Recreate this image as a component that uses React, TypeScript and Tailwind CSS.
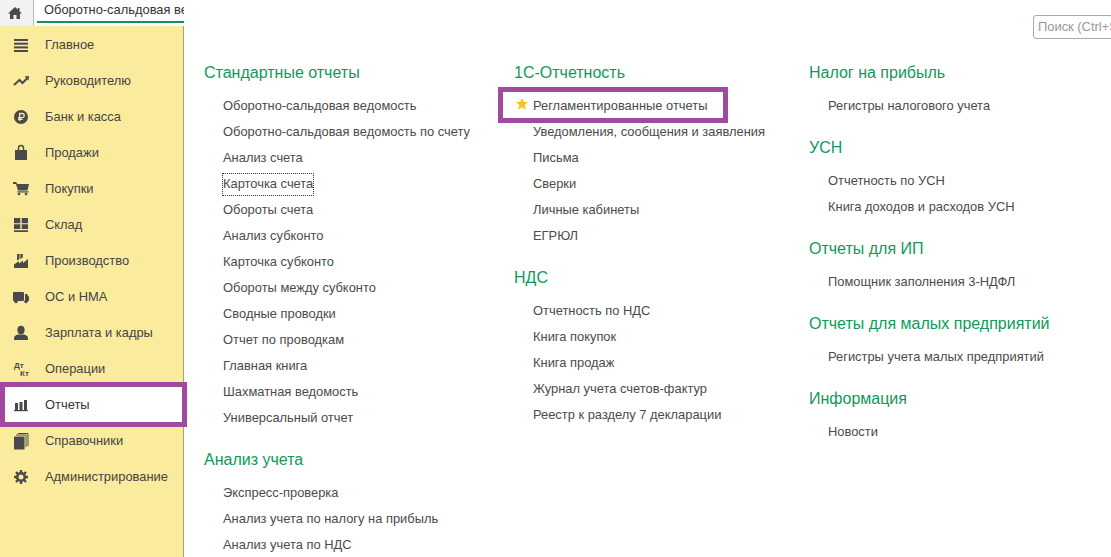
import type { ReactNode } from "react";

const ic = "#4a4a4a";

const icons: Record<string, ReactNode> = {
  main: (
    <g fill={ic}>
      <rect x="0" y="2" width="14" height="2" />
      <rect x="0" y="5.7" width="14" height="2" />
      <rect x="0" y="9.4" width="14" height="2" />
      <rect x="0" y="13" width="14" height="2" />
    </g>
  ),
  chart: (
    <g>
      <path d="M0 12L5.5 7l3 3L13 5.5" fill="none" stroke={ic} strokeWidth="2" />
      <path d="M10.5 3.5L15 3l-.5 4.5z" fill={ic} />
    </g>
  ),
  bank: (
    <g>
      <circle cx="7" cy="8" r="7" fill={ic} />
      <path d="M5.7 12V4.5h2.4a2 2 0 010 4.2H4M4 10.4h4.5" fill="none" stroke="#fbeb9d" strokeWidth="1.3" />
    </g>
  ),
  bag: (
    <g>
      <path d="M1 5h12v10H1z" fill={ic} />
      <path d="M4.5 7V3a2.5 2.5 0 015 0v4" fill="none" stroke={ic} strokeWidth="1.5" />
    </g>
  ),
  cart: (
    <g fill={ic}>
      <path d="M-1 1h3l1.5 2H15l-1.5 6.5H4L2 3H-1z" />
      <rect x="3.5" y="10.3" width="11" height="1.2" />
      <circle cx="5" cy="13" r="1.3" />
      <circle cx="12" cy="13" r="1.3" />
    </g>
  ),
  store: <path d="M0 1h6.3v5.3H0zM7.7 1H14v5.3H7.7zM0 7.3h6.3V12H0zM7.7 7.3H14V12H7.7zM0 13.3h14V15H0z" fill={ic} />,
  factory: (
    <g fill={ic}>
      <path d="M3 1h2.5v5L3 7.5zM6.3 1h2.5v3.5L6.3 6z" />
      <path d="M0 15v-3.5L5 8v2.5L9 7.5V10l5-4v9z" />
    </g>
  ),
  truck: (
    <g fill={ic}>
      <rect x="-1" y="3" width="11" height="9" rx="1" />
      <path d="M11 5h2l2 3v4h-4z" />
      <circle cx="2" cy="12.5" r="1.7" />
      <circle cx="12" cy="12.5" r="1.7" />
    </g>
  ),
  user: (
    <g fill={ic}>
      <ellipse cx="7" cy="5" rx="3.6" ry="4.2" />
      <path d="M0 15v-2c0-2 3-3.5 4.5-3.5h5c1.5 0 4.5 1.5 4.5 3.5v2z" />
    </g>
  ),
  bars: (
    <g fill={ic}>
      <rect x="1" y="6" width="3" height="8" />
      <rect x="5.5" y="5" width="3" height="9" />
      <rect x="10" y="3" width="3" height="11" />
      <rect x="0" y="13" width="14" height="1.2" />
    </g>
  ),
  books: (
    <g>
      <rect x="0" y="3.5" width="10.5" height="13" fill={ic} />
      <path d="M2 2h10v12M4 .5h10v12.5" fill="none" stroke={ic} strokeWidth="1" />
    </g>
  ),
  gear: (
    <g transform="translate(-1 0)">
      <circle cx="8" cy="8" r="3.8" fill="none" stroke={ic} strokeWidth="2.6" />
      <path
        d="M8 1v3M8 12v3M1 8h3M12 8h3M3 3l2.1 2.1M10.9 10.9L13 13M13 3l-2.1 2.1M5.1 10.9L3 13"
        stroke={ic}
        strokeWidth="2.4"
      />
    </g>
  ),
};

const menu = [
  ["main", "Главное"],
  ["chart", "Руководителю"],
  ["bank", "Банк и касса"],
  ["bag", "Продажи"],
  ["cart", "Покупки"],
  ["store", "Склад"],
  ["factory", "Производство"],
  ["truck", "ОС и НМА"],
  ["user", "Зарплата и кадры"],
  ["dtkt", "Операции"],
  ["bars", "Отчеты"],
  ["books", "Справочники"],
  ["gear", "Администрирование"],
];

function MenuIcon({ name }: { name: string }) {
  if (name === "dtkt") {
    return (
      <span className="relative block h-4 w-4 text-[8px] font-bold leading-none text-[#4a4a4a]">
        <span className="absolute left-0 top-[1px]">Дт</span>
        <span className="absolute left-[6px] top-[9px]">Кт</span>
      </span>
    );
  }
  return (
    <svg width="16" height="16" viewBox="0 0 16 16" className="overflow-visible">
      {icons[name]}
    </svg>
  );
}

function Section({ title, items }: { title: string; items: string[] }) {
  return (
    <div>
      <h2 className="mb-2 h-6 text-[16px] leading-6 text-[#0d9a5a]">{title}</h2>
      <ul>
        {items.map((item) => (
          <li key={item} className="h-[26px] whitespace-nowrap pl-[19px] text-[12.9px] leading-[26px] text-[#4b4b4b]">
            {item === "Регламентированные отчеты" ? (
              <span className="relative block">
                <span className="absolute left-[-35px] top-[-6px] h-9 w-[230px] border-[5px] border-[#9f4a9f]" />
                <svg className="absolute left-[-17px] top-[5px]" width="12" height="12" viewBox="0 0 12 12">
                  <path d="M6 0l1.8 4H12L8.7 6.9 9.8 12 6 9.3 2.2 12l1.1-5.1L0 4h4.2z" fill="#fcc21b" />
                </svg>
                {item}
              </span>
            ) : item === "Карточка счета" ? (
              <span className="inline-block h-[21px] leading-[19px] outline-1 outline-dotted outline-[#333]">{item}</span>
            ) : (
              item
            )}
          </li>
        ))}
      </ul>
    </div>
  );
}

export default function App() {
  return (
    <div className="flex h-[557px] w-[1111px] overflow-hidden bg-white font-['Liberation_Sans',Arial,sans-serif]">
      <aside className="flex w-[184px] shrink-0 flex-col">
        <div className="flex h-[26px]">
          <div className="flex w-[34px] items-center justify-center border-r border-[#bdbdbd] bg-[#f2f2f2] pr-[3px]">
            <svg width="14" height="14" viewBox="0 0 14 14">
              <path d="M7 1L0 7.5H2V13H5.5V9H8.5V13H12V7.5H14L11.5 5.2V2H9.8V3.6z" fill="#4a4a4a" />
            </svg>
          </div>
          <div className="w-[150px] overflow-hidden whitespace-nowrap pl-[10px] pt-[2px] text-[12.9px] leading-[16px] text-[#333]">
            Оборотно-сальдовая ведомость
            <div className="ml-[-7px] mt-[3px] h-[2px] w-[150px] bg-[#1a8a5a]" />
          </div>
        </div>
        <nav className="flex-1 border-r border-[#a9a26c] bg-[#fbeb9d] pt-px">
          {menu.map(([icon, label]) => (
            <div
              key={label}
              className={`relative flex h-9 items-center pl-[14px] text-[12.9px] ${label === "Отчеты" ? "bg-white text-[#333]" : "text-[#444]"}`}
            >
              {label === "Отчеты" && (
                <span className="absolute left-0 top-[-5px] h-[45px] w-[187px] border-[5px] border-[#9f4a9f]" />
              )}
              <span className="relative mr-[15px]">
                <MenuIcon name={icon} />
              </span>
              <span className="relative">{label}</span>
            </div>
          ))}
        </nav>
      </aside>
      <main className="min-w-0 flex-1">
        <div className="flex pl-[849px] pt-[15px]">
          <div className="h-6 w-[100px] shrink-0 whitespace-nowrap rounded-[3px] border border-[#aaa] pl-1 text-[12.9px] leading-[22px] text-[#999]">
            Поиск (Ctrl+Shift+F)
          </div>
        </div>
        <div className="flex pl-5 pt-[22px]">
          <div className="flex w-[310px] flex-col gap-[17px]">
            <Section
              title="Стандартные отчеты"
              items={[
                "Оборотно-сальдовая ведомость",
                "Оборотно-сальдовая ведомость по счету",
                "Анализ счета",
                "Карточка счета",
                "Обороты счета",
                "Анализ субконто",
                "Карточка субконто",
                "Обороты между субконто",
                "Сводные проводки",
                "Отчет по проводкам",
                "Главная книга",
                "Шахматная ведомость",
                "Универсальный отчет",
              ]}
            />
            <Section
              title="Анализ учета"
              items={["Экспресс-проверка", "Анализ учета по налогу на прибыль", "Анализ учета по НДС"]}
            />
          </div>
          <div className="flex w-[295px] flex-col gap-[17px]">
            <Section
              title="1С-Отчетность"
              items={[
                "Регламентированные отчеты",
                "Уведомления, сообщения и заявления",
                "Письма",
                "Сверки",
                "Личные кабинеты",
                "ЕГРЮЛ",
              ]}
            />
            <Section
              title="НДС"
              items={[
                "Отчетность по НДС",
                "Книга покупок",
                "Книга продаж",
                "Журнал учета счетов-фактур",
                "Реестр к разделу 7 декларации",
              ]}
            />
          </div>
          <div className="flex flex-col gap-[17px]">
            <Section title="Налог на прибыль" items={["Регистры налогового учета"]} />
            <Section title="УСН" items={["Отчетность по УСН", "Книга доходов и расходов УСН"]} />
            <Section title="Отчеты для ИП" items={["Помощник заполнения 3-НДФЛ"]} />
            <Section title="Отчеты для малых предприятий" items={["Регистры учета малых предприятий"]} />
            <Section title="Информация" items={["Новости"]} />
          </div>
        </div>
      </main>
    </div>
  );
}
